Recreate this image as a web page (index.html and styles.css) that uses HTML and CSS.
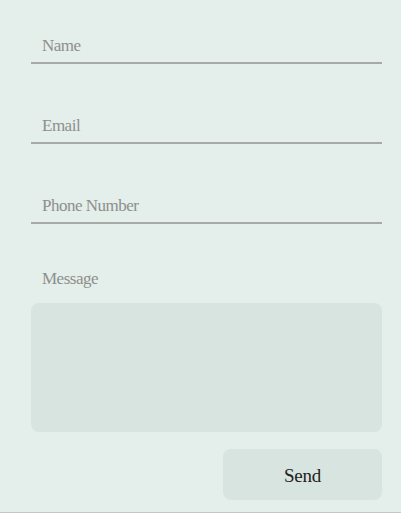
FILE: index.html
```html
<!DOCTYPE html>
<html lang="en">
<head>
<meta charset="utf-8">
<title>Contact</title>
<link rel="stylesheet" href="styles.css">
</head>
<body>
<div class="page">
  <form class="form">
    <div class="field"><span class="label">Name</span></div>
    <div class="field"><span class="label">Email</span></div>
    <div class="field"><span class="label">Phone Number</span></div>
    <div class="message-label label">Message</div>
    <div class="textarea"></div>
    <div class="actions"><button type="button" class="send">Send</button></div>
  </form>
</div>
</body>
</html>
```
FILE: styles.css
```css
html, body {
  margin: 0;
  padding: 0;
  background: #e4eeea;
}
.page {
  border-bottom: 1px solid #c3c8c5;
  box-sizing: border-box;
  height: 513px;
  font-family: "Liberation Serif", serif;
}
.form {
  margin: 0 19px 0 31px;
  display: flex;
  flex-direction: column;
}
.field {
  padding: 34px 0 4px 11px;
  line-height: 24px;
  border-bottom: 2px solid #a6aba8;
  margin-bottom: 16px;
}
.field:last-of-type {
  margin-bottom: 0;
}
.label {
  font-family: "Liberation Serif", serif;
  font-size: 17px;
  letter-spacing: -0.5px;
  color: #8c908d;
}
.message-label {
  margin-top: 27px;
  padding-left: 11px;
  line-height: 24px;
}
.textarea {
  margin-top: 12px;
  height: 129px;
  background: #d7e4e0;
  border-radius: 8px;
}
.actions {
  display: flex;
  justify-content: flex-end;
  margin-top: 17px;
}
.send {
  box-sizing: border-box;
  width: 159px;
  height: 51px;
  border: none;
  border-radius: 8px;
  background: #d7e4e0;
  font-family: "Liberation Serif", serif;
  font-size: 19px;
  letter-spacing: -0.3px;
  color: #1f2220;
  padding: 2px 0 0;
  line-height: 49px;
}
```
